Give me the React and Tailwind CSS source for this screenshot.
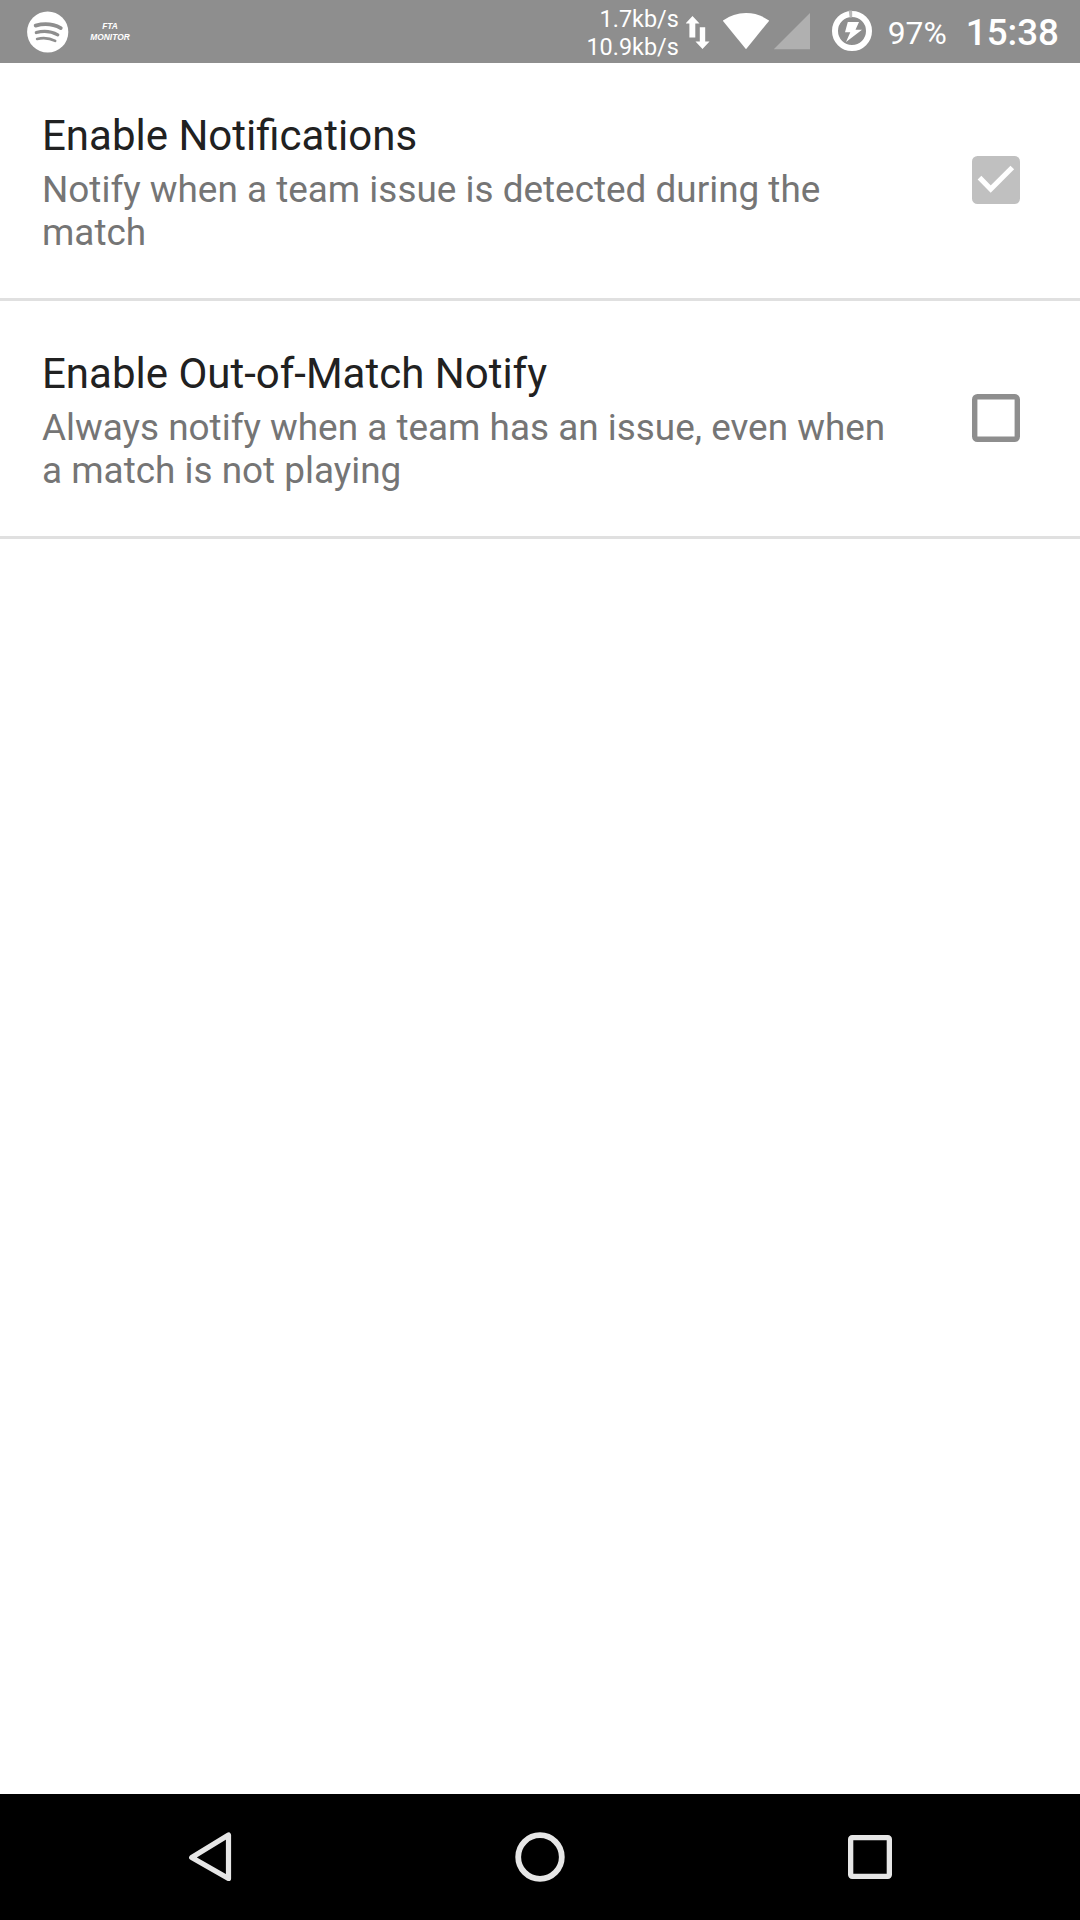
const settings = [
  {
    title: 'Enable Notifications',
    summary: 'Notify when a team issue is detected during the match',
    checked: true,
  },
  {
    title: 'Enable Out-of-Match Notify',
    summary: 'Always notify when a team has an issue, even when a match is not playing',
    checked: false,
  },
];

function SpotifyIcon() {
  return (
    <svg className="ml-[27px] h-[42px] w-[42px] shrink-0" viewBox="0 0 42 42" fill="none">
      <circle cx="20.7" cy="21" r="20.6" fill="#fff" />
      <g stroke="#8e8e8e" strokeLinecap="round">
        <path d="M8.6 14.6c8.500-2.300 18-1.500 25.200 2.500" strokeWidth="3.700" />
        <path d="M9.300 21.500c7.500-2 15.200-1.200 21.500 2.300" strokeWidth="3.200" />
        <path d="M10.100 27.900c6.400-1.500 12.700-.8 18.100 2" strokeWidth="2.600" />
      </g>
    </svg>
  );
}

function StatusBar() {
  return (
    <header className="flex h-[63px] items-center bg-[#8e8e8e] text-white">
      <SpotifyIcon />
      <div className="ml-[19px] w-[44px] text-center font-['Liberation_Sans',sans-serif] text-[8.400px] leading-[11px] font-bold italic">
        <div>FTA</div>
        <div>MONITOR</div>
      </div>
      <div className="ml-auto pt-[2px] text-right text-[23.400px] leading-[28px]">
        <div>1.7kb/s</div>
        <div>10.9kb/s</div>
      </div>
      <svg className="ml-[7px] h-[63px] w-[24px]" viewBox="686 0 24 63" fill="#fff">
        <path d="M692.500 16l7 7.500h-4.200V37.500h-5.900V23.500H685.500z" />
        <path d="M702.500 49l-7-7.500h4.300V27.200h5.400V41.500h4.300z" />
      </svg>
      <svg className="ml-[13px] h-[63px] w-[46px]" viewBox="723 0 46 63" fill="#fff">
        <path d="M746 49.200L722.800 20.700Q733 13 746 13T769.200 20.700z" />
      </svg>
      <svg className="ml-[5px] h-[63px] w-[36px]" viewBox="774 0 36 63">
        <path d="M773.700 49.200L810 13v36.200z" fill="#b0b0b0" />
      </svg>
      <svg className="ml-[22px] h-[63px] w-[40px]" viewBox="832 0 40 63">
        <circle cx="852" cy="31" r="17" fill="none" stroke="#fff" strokeWidth="6" />
        <path d="M848.700 10.500h3.500v7h-2.500z" fill="#b8b8b8" />
        <path d="M847.800 22h11.200l-3.500 7.800h6.500L846 42l4.300-9.800h-5.300z" fill="#fff" />
      </svg>
      <div className="ml-[16px] w-[60px] pt-[2px] text-[31.800px] leading-[38px]">97%</div>
      <div className="mr-[21px] ml-[18px] pt-[3px] text-[36.750px] leading-[44px] font-medium">15:38</div>
    </header>
  );
}

function Checkbox({ checked }) {
  return (
    <svg className="mb-[2px] mr-[60px] h-[48px] w-[48px] shrink-0" viewBox="0 0 48 48" fill="none">
      {checked ? (
        <>
          <rect width="48" height="48" rx="5.500" fill="#c0c0c0" />
          <path d="M7.500 21.700L18.700 33L40.300 11.500" stroke="#fff" strokeWidth="5.200" />
        </>
      ) : (
        <rect x="2.700" y="2.700" width="42.600" height="42.600" rx="2.700" stroke="#8e8e8e" strokeWidth="5.400" />
      )}
    </svg>
  );
}

function SettingRow({ title, summary, checked }) {
  return (
    <label className="flex h-[238px] items-center border-b-[3px] border-[#e0e0e0]">
      <div className="ml-[42px] w-[856px] pt-[3px]">
        <div className="text-[42px] leading-[49px] text-[#212121]">{title}</div>
        <div className="mt-[8px] text-[36.900px] leading-[43px] text-[#757575]">{summary}</div>
      </div>
      <div className="ml-auto">
        <Checkbox checked={checked} />
      </div>
    </label>
  );
}

function NavigationBar() {
  return (
    <nav className="flex h-[126px] items-center bg-black">
      <svg className="ml-[188px] h-[52px] w-[44px]" viewBox="188 1831 44 52" fill="none" stroke="#e6e6e6" strokeWidth="5.200" strokeLinejoin="round">
        <path d="M228.500 1835v43.500L191.700 1857.500z" />
      </svg>
      <svg className="ml-[283px] h-[50px] w-[50px]" viewBox="0 0 50 50" fill="none" stroke="#e6e6e6" strokeWidth="5.800">
        <circle cx="25" cy="25" r="21.800" />
      </svg>
      <svg className="ml-[283px] h-[44px] w-[44px]" viewBox="0 0 44 44" fill="none" stroke="#e6e6e6" strokeWidth="5.300">
        <rect x="2.650" y="2.650" width="38.700" height="38.700" rx="1.500" />
      </svg>
    </nav>
  );
}

export default function App() {
  return (
    <div className="flex h-[1920px] w-[1080px] flex-col overflow-hidden bg-white font-[Roboto,sans-serif]">
      <StatusBar />
      <main className="flex-1">
        {settings.map((setting) => (
          <SettingRow key={setting.title} {...setting} />
        ))}
      </main>
      <NavigationBar />
    </div>
  );
}
